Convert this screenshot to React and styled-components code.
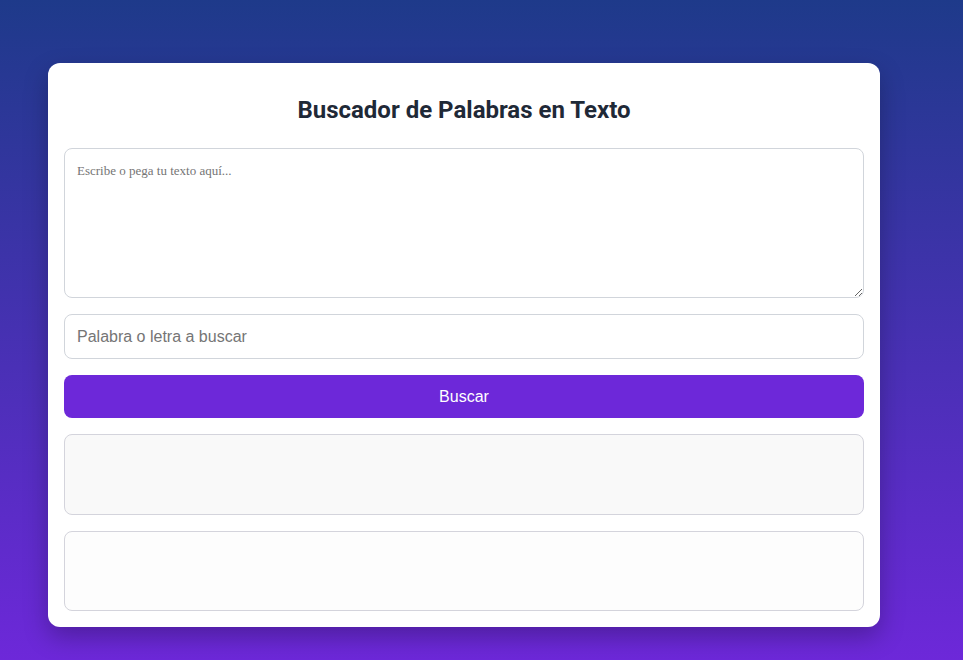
import React from "react";
import styled, { createGlobalStyle } from "styled-components";

const Global = createGlobalStyle`
  html, body { margin: 0; padding: 0; }
  body {
    min-height: 660px;
    background: linear-gradient(to bottom, #1e3a8a, #6d28d9);
    font-family: "Liberation Sans", Arial, sans-serif;
  }
  * { box-sizing: border-box; }
`;

const Page = styled.div`
  min-height: 660px;
  padding: 63px 0 0 48px;
`;

const Card = styled.div`
  width: 832px;
  background: #ffffff;
  border-radius: 12px;
  padding: 16px;
  box-shadow: 0 10px 25px rgba(0, 0, 0, 0.25);
  display: flex;
  flex-direction: column;
  gap: 16px;
`;

const Title = styled.h2`
  margin: 17px 0 8px;
  text-align: center;
  font-family: Roboto, "Liberation Sans", sans-serif;
  font-weight: 700;
  font-size: 24px;
  line-height: 28px;
  color: #1f2937;
`;

const TextArea = styled.textarea`
  display: block;
  width: 100%;
  height: 150px;
  padding: 14px 12px 12px;
  border: 1px solid #d1d5db;
  border-radius: 8px;
  font-family: "Liberation Serif", serif;
  font-size: 13px;
  color: #333;
  outline: none;
  &::placeholder { color: #757575; }
`;

const Input = styled.input`
  display: block;
  width: 100%;
  height: 45px;
  padding: 0 12px;
  border: 1px solid #d1d5db;
  border-radius: 8px;
  font-family: "Liberation Sans", Arial, sans-serif;
  font-size: 16px;
  outline: none;
  &::placeholder { color: #757575; }
`;

const Button = styled.button`
  height: 43px;
  border: none;
  border-radius: 8px;
  background: #6d28d9;
  color: #ffffff;
  font-family: "Liberation Sans", Arial, sans-serif;
  font-size: 16px;
  cursor: pointer;
`;

const Box = styled.div`
  height: ${(p) => p.$h}px;
  border: 1px solid #d4d4dc;
  border-radius: 8px;
  background: ${(p) => p.$bg};
`;

export default function App() {
  return (
    <>
      <Global />
      <Page>
        <Card>
          <Title>Buscador de Palabras en Texto</Title>
          <TextArea placeholder="Escribe o pega tu texto aquí..." />
          <Input placeholder="Palabra o letra a buscar" />
          <Button>Buscar</Button>
          <Box $h={81} $bg="#f9f9f9" />
          <Box $h={80} $bg="#fdfdfd" />
        </Card>
      </Page>
    </>
  );
}
